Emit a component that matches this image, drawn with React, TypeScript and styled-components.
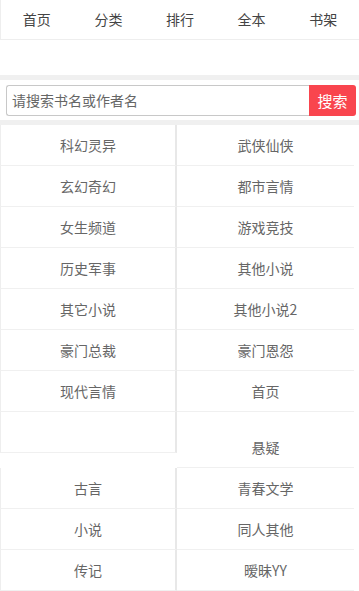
import React from 'react';
import styled, { createGlobalStyle } from 'styled-components';

const GlobalStyle = createGlobalStyle`
  html, body {
    margin: 0;
    padding: 0;
    background: #fff;
  }
  body {
    font-family: "Microsoft YaHei", "Noto Sans CJK SC", "Liberation Sans", sans-serif;
    font-size: 14px;
    color: #666;
  }
  * {
    box-sizing: border-box;
  }
`;

const Page = styled.div`
  width: 359px;
`;

const Nav = styled.div`
  display: flex;
  height: 40px;
  border-left: 1px solid #eee;
  border-bottom: 1px solid #eee;
`;

const NavItem = styled.a`
  flex: 1;
  text-align: center;
  line-height: 39px;
  color: #444;
  font-size: 14px;
  text-decoration: none;
`;

const Blank = styled.div`
  height: 35px;
`;

const Band = styled.div`
  height: 5px;
  background: #f0f0f0;
`;

const SearchBar = styled.form`
  display: flex;
  align-items: center;
  height: 40px;
  padding: 0 3px 0 6px;
  margin: 0;
`;

const SearchInput = styled.input`
  flex: 1;
  height: 31px;
  border: 1px solid #c8c8c8;
  border-right: none;
  border-radius: 3px 0 0 3px;
  padding: 0 5px;
  font-family: inherit;
  font-size: 14px;
  color: #666;
  outline: none;
  &::placeholder {
    color: #666;
  }
`;

const SearchButton = styled.button`
  width: 47px;
  height: 31px;
  border: none;
  border-radius: 0 3px 3px 0;
  background: #f9454e;
  color: #fff;
  font-family: inherit;
  font-size: 15px;
  padding: 0;
`;

const List = styled.ul`
  list-style: none;
  margin: 0;
  padding: 0;
  font-size: 0;
`;

const Cell = styled.li<{ $left: boolean }>`
  display: inline-block;
  width: ${(p) => (p.$left ? '177px' : '177px')};
  height: 41px;
  line-height: 40px;
  font-size: 14px;
  text-align: center;
  color: #666;
  border-bottom: 1px solid #f0f0f0;
  border-left: ${(p) => (p.$left ? '1px solid #eee' : 'none')};
  border-right: ${(p) => (p.$left ? '2px solid #e8e8e8' : 'none')};
  vertical-align: baseline;
`;

const navItems = ['首页', '分类', '排行', '全本', '书架'];

const categories = [
  '科幻灵异', '武侠仙侠',
  '玄幻奇幻', '都市言情',
  '女生频道', '游戏竞技',
  '历史军事', '其他小说',
  '其它小说', '其他小说2',
  '豪门总裁', '豪门恩怨',
  '现代言情', '首页',
  '', '悬疑',
  '古言', '青春文学',
  '小说', '同人其他',
  '传记', '暧昧YY',
];

const App = () => (
  <Page>
    <GlobalStyle />
    <Nav>
      {navItems.map((item) => <NavItem key={item}>{item}</NavItem>)}
    </Nav>
    <Blank />
    <Band />
    <SearchBar onSubmit={(e) => e.preventDefault()}>
      <SearchInput placeholder="请搜索书名或作者名" />
      <SearchButton type="submit">搜索</SearchButton>
    </SearchBar>
    <Band />
    <List>
      {categories.map((name, i) => (
        <Cell key={i} $left={i % 2 === 0}>{name}</Cell>
      ))}
    </List>
  </Page>
);

export default App;
